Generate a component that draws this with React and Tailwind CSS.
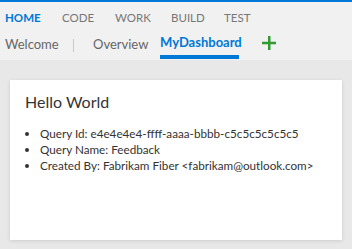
export default function App() {
  const font = { fontFamily: 'Lato, "Open Sans", sans-serif' };
  return (
    <div className="w-[352px] h-[249px] bg-[#e8e8e8] overflow-hidden" style={font}>
      <div className="bg-[#f1f1f1] border-t-[2px] border-[#0078d7] h-[60px] flex flex-col">
        <div className="flex items-center h-[28px] pt-[3px] pl-[5px] text-[11.5px] text-[#777]">
          <span className="text-[#0078d7] font-bold w-[57px] whitespace-nowrap">HOME</span>
          <span className="w-[53px]">CODE</span>
          <span className="w-[56px]">WORK</span>
          <span className="w-[53px]">BUILD</span>
          <span>TEST</span>
        </div>
        <div className="flex items-stretch h-[30px] pl-[5px] text-[13px] text-[#666]">
          <div className="flex items-center w-[49px] whitespace-nowrap">Welcome</div>
          <div className="flex items-center ml-[19px] mr-[19px]">
            <div className="w-[1px] h-[13px] bg-[#c8c8c8]"></div>
          </div>
          <div className="flex items-center w-[49px] whitespace-nowrap">Overview</div>
          <div className="ml-[18px] flex flex-col justify-between w-[79px]">
            <div className="flex-1 flex items-center text-[#0078d7] font-bold whitespace-nowrap">MyDashboard</div>
            <div className="h-[4px] bg-[#0078d7] mb-[1px]"></div>
          </div>
          <div className="flex items-center ml-[23px] pb-[5px]">
            <svg width="14" height="14" viewBox="0 0 14 14">
              <rect x="6" y="0" width="2.5" height="14" fill="#339933" />
              <rect x="0" y="5.75" width="14" height="2.5" fill="#339933" />
            </svg>
          </div>
        </div>
      </div>
      <div className="pt-[20px] px-[10px]">
        <div className="bg-white h-[160px] shadow-[0_1px_4px_rgba(0,0,0,0.12)] pl-[15px] pt-[12px] text-[#333]">
          <div className="text-[16px] leading-[20px]">Hello World</div>
          <ul className="list-disc pl-[15px] mt-[13px] text-[11.7px] leading-[16px]">
            <li>Query Id: e4e4e4e4-ffff-aaaa-bbbb-c5c5c5c5c5c5</li>
            <li>Query Name: Feedback</li>
            <li>Created By: Fabrikam Fiber &lt;fabrikam@outlook.com&gt;</li>
          </ul>
        </div>
      </div>
    </div>
  );
}
